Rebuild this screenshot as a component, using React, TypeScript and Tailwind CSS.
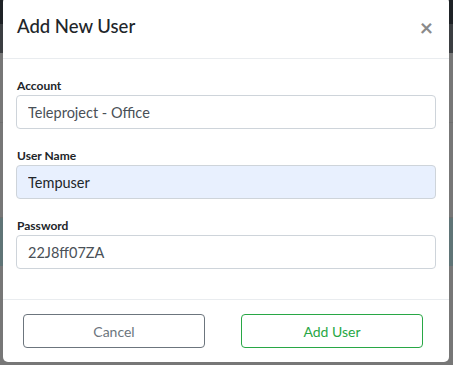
import React, { useState } from "react";

const fieldClass =
  "w-full h-[34px] px-[11px] rounded-[4px] border border-[#ced4da] text-[14.5px] outline-none";

const labelClass =
  "block h-5 pt-[2px] pl-[1px] text-[12px] font-bold text-[#212529]";

const App: React.FC = () => {
  const [account, setAccount] = useState("Teleproject - Office");
  const [userName, setUserName] = useState("Tempuser");
  const [password, setPassword] = useState("22J8ff07ZA");

  return (
    <div
      className="relative w-[453px] h-[365px] overflow-hidden bg-[#777777]"
      style={{ fontFamily: 'Lato, "Open Sans", sans-serif' }}
    >
      {/* page behind the backdrop */}
      <div className="flex flex-col h-full">
        <div className="h-[24px] bg-[#1e2226]" />
        <div className="h-[29px] bg-[#3b3e41]" />
        <div className="h-[70px] border-b border-[#6e6e6e]" />
        <div className="h-[95px] border-b border-[#6e6e6e]" />
        <div className="h-[48px] bg-[#5f7476]" />
        <div className="flex-1" />
      </div>

      {/* modal */}
      <div className="absolute left-[3px] top-[-3px] w-[446px] h-[365px] bg-white rounded-[5px] flex flex-col">
        <div className="flex items-center justify-between h-[62px] pl-[14px] pr-[16px] border-b border-[#e9ecef]">
          <h5 className="text-[18.5px] font-medium text-[#212529] leading-[30px] pb-[3px]">
            Add New User
          </h5>
          <button className="text-[23px] font-bold leading-none text-[#8a8a8a]">
            ×
          </button>
        </div>

        <div className="flex flex-col gap-4 px-[13px] pt-4 pb-[30px]">
          <div>
            <label className={labelClass}>Account</label>
            <input
              className={`${fieldClass} text-[#495057] bg-white`}
              value={account}
              onChange={(e) => setAccount(e.target.value)}
            />
          </div>
          <div>
            <label className={labelClass}>User Name</label>
            <input
              className={`${fieldClass} text-[#212529] bg-[#e8f0fe]`}
              value={userName}
              onChange={(e) => setUserName(e.target.value)}
            />
          </div>
          <div>
            <label className={labelClass}>Password</label>
            <input
              className={`${fieldClass} text-[#495057] bg-white`}
              value={password}
              onChange={(e) => setPassword(e.target.value)}
            />
          </div>
        </div>

        <div className="flex-1 flex items-center gap-[36px] pl-[20px] border-t border-[#e9ecef]">
          <button className="w-[182px] h-[34px] rounded-[4px] border border-[#6c757d] text-[14px] text-[#6c757d]">
            Cancel
          </button>
          <button className="w-[182px] h-[34px] rounded-[4px] border border-[#28a745] text-[14px] text-[#28a745]">
            Add User
          </button>
        </div>
      </div>
    </div>
  );
};

export default App;
